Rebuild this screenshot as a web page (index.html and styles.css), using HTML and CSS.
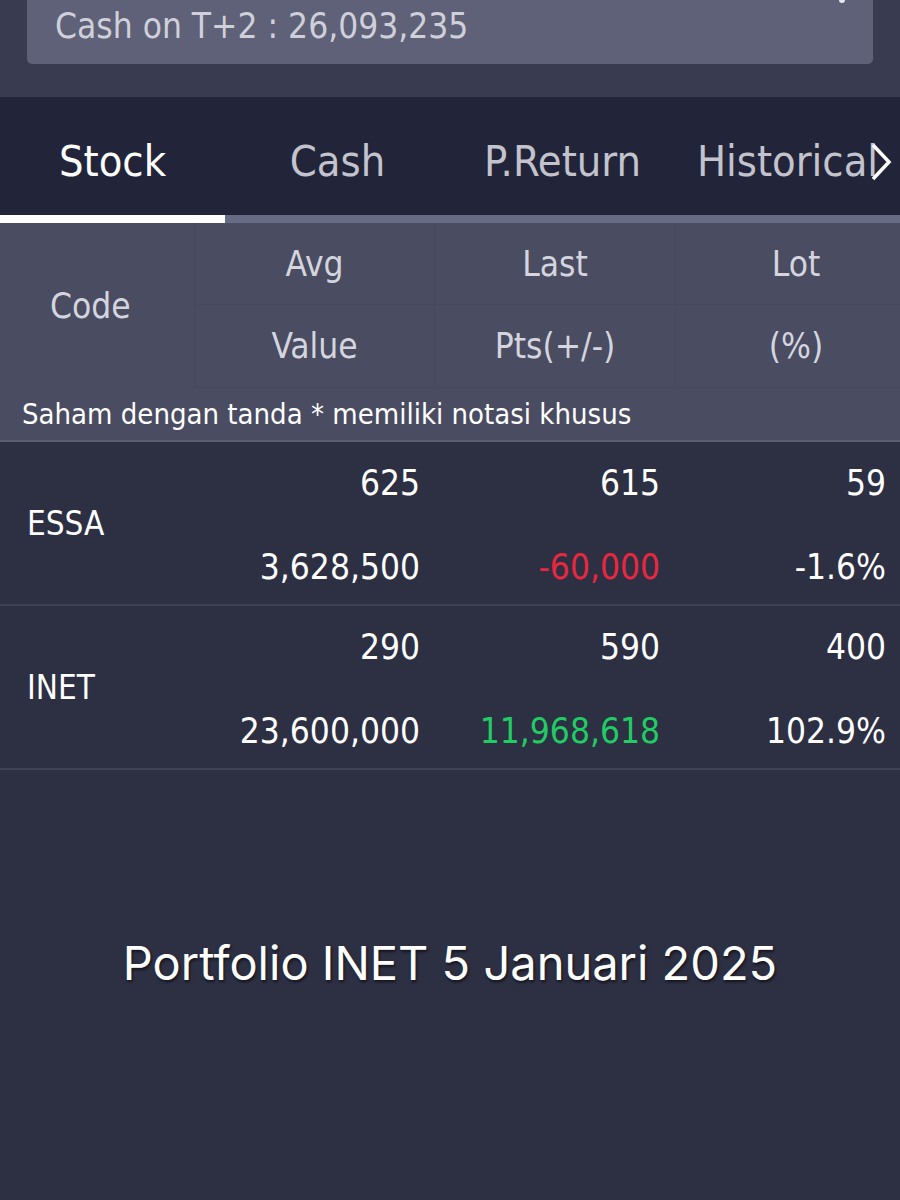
FILE: index.html
```html
<!DOCTYPE html>
<html lang="id">
<head>
    <meta charset="UTF-8">
    <meta name="viewport" content="width=device-width, initial-scale=1.0">
    <title>Portfolio</title>
    <link rel="stylesheet" href="styles.css">
</head>
<body>

    <div class="top">
        <div class="cash-card">
            <span class="dot"></span>
            Cash on T+2 : 26,093,235
        </div>
    </div>

    <div class="tabs">
        <div class="tab active">Stock</div>
        <div class="tab">Cash</div>
        <div class="tab">P.Return</div>
        <div class="tab">Historical</div>
        <svg class="chevron" width="22" height="40" viewBox="0 0 22 40">
            <path d="M3 3 L19 20 L3 37" fill="none" stroke="#fff" stroke-width="3.5"/>
        </svg>
    </div>
    <div class="tab-bar"><div class="tab-indicator"></div></div>

    <div class="head">
        <div class="head-code">Code</div>
        <div class="head-cell">Avg</div>
        <div class="head-cell">Last</div>
        <div class="head-cell last">Lot</div>
        <div class="head-cell">Value</div>
        <div class="head-cell">Pts(+/-)</div>
        <div class="head-cell last">(%)</div>
    </div>
    <div class="note">Saham dengan tanda * memiliki notasi khusus</div>

    <div class="rows">
        <div class="row">
            <div class="code">ESSA</div>
            <div class="num">625</div>
            <div class="num">615</div>
            <div class="num">59</div>
            <div class="num">3,628,500</div>
            <div class="num down">-60,000</div>
            <div class="num">-1.6%</div>
        </div>
        <div class="row">
            <div class="code">INET</div>
            <div class="num">290</div>
            <div class="num">590</div>
            <div class="num">400</div>
            <div class="num">23,600,000</div>
            <div class="num up">11,968,618</div>
            <div class="num">102.9%</div>
        </div>
    </div>

    <div class="caption">Portfolio INET 5 Januari 2025</div>

</body>
</html>
```

FILE: styles.css
```css
body {
    margin: 0;
    padding: 0;
    width: 900px;
    height: 1200px;
    overflow: hidden;
    background-color: #2d2f43;
    color: white;
    font-family: 'DejaVu Sans', sans-serif;
    font-stretch: condensed;
}
.top {
    background: #393b50;
    height: 97px;
    padding: 0 27px;
    box-sizing: border-box;
}
.cash-card {
    position: relative;
    background: #5f6178;
    height: 64px;
    border-radius: 0 0 5px 5px;
    padding: 0 28px;
    color: #cfd0da;
    font-size: 35px;
    line-height: 52px;
}
.dot {
    position: absolute;
    right: 28px;
    top: -3px;
    width: 6px;
    height: 6px;
    border-radius: 50%;
    background: #e6e7ef;
}
.tabs {
    display: flex;
    align-items: center;
    background: #22253a;
    height: 118px;
    padding-top: 10px;
    box-sizing: border-box;
    position: relative;
    overflow: hidden;
}
.tab {
    flex: 0 0 225px;
    text-align: center;
    font-size: 43px;
    color: #c2c3cc;
    white-space: nowrap;
}
.tab.active {
    color: #ffffff;
}
.chevron {
    position: absolute;
    right: 8px;
    top: 45px;
}
.tab-bar {
    height: 8px;
    background: #686b84;
}
.tab-indicator {
    width: 225px;
    height: 8px;
    background: #ffffff;
}
.head {
    display: grid;
    grid-template-columns: 195px 240px 241px 224px;
    grid-template-rows: 82px 83px;
    background: #4a4c62;
}
.head-code {
    grid-row: 1 / 3;
    display: flex;
    align-items: center;
    padding-left: 50px;
    font-size: 35px;
    color: #d4d5de;
    border-right: 1px solid #45475c;
}
.head-cell {
    display: flex;
    align-items: center;
    justify-content: center;
    font-size: 35px;
    color: #d4d5de;
    border-right: 1px solid #45475c;
    border-bottom: 1px solid #45475c;
}
.head-cell.last {
    border-right: none;
    padding-left: 16px;
}
.note {
    background: #4a4c62;
    padding: 0 22px;
    height: 52px;
    line-height: 52px;
    font-size: 29px;
    border-bottom: 2px solid #5a5c72;
}
.row {
    display: grid;
    grid-template-columns: 195px 225px 240px 226px;
    grid-template-rows: 82px 80px;
    border-bottom: 2px solid #3f4257;
    padding-right: 14px;
}
.code {
    grid-row: 1 / 3;
    display: flex;
    align-items: center;
    padding-left: 27px;
    font-size: 33px;
}
.num {
    text-align: right;
    font-size: 35px;
    line-height: 82px;
}
.num:nth-child(n+5) {
    line-height: 82px;
    margin-top: 2px;
}
.down {
    color: #e8283f;
}
.up {
    color: #21cc63;
}
.caption {
    margin-top: 164px;
    text-align: center;
    font-family: 'Inter', sans-serif;
    font-size: 47px;
    color: #ffffff;
    text-shadow: 1px 2px 3px rgba(0, 0, 0, 0.6);
}
```
